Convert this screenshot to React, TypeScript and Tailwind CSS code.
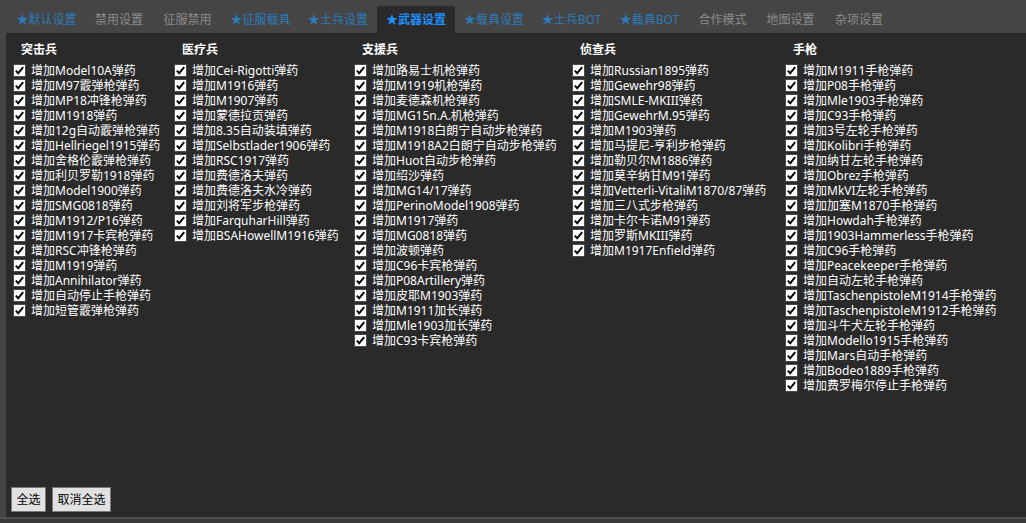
import React from "react";

const tabs: { label: string; kind: "star" | "plain" | "active"; w: string }[] = [
  { label: "★默认设置", kind: "star", w: "w-[77px]" },
  { label: "禁用设置", kind: "plain", w: "w-[68px]" },
  { label: "征服禁用", kind: "plain", w: "w-[69px]" },
  { label: "★征服载具", kind: "star", w: "w-[77px]" },
  { label: "★士兵设置", kind: "star", w: "w-[78px]" },
  { label: "★武器设置", kind: "active", w: "w-[78px]" },
  { label: "★载具设置", kind: "star", w: "w-[78px]" },
  { label: "★士兵BOT", kind: "star", w: "w-[77px]" },
  { label: "★载具BOT", kind: "star", w: "w-[79px]" },
  { label: "合作模式", kind: "plain", w: "w-[67px]" },
  { label: "地图设置", kind: "plain", w: "w-[69px]" },
  { label: "杂项设置", kind: "plain", w: "w-[68px]" },
];

const columns: { title: string; width: string; items: string[] }[] = [
  {
    title: "突击兵",
    width: "w-[161px]",
    items: [
      "增加Model10A弹药",
      "增加M97霰弹枪弹药",
      "增加MP18冲锋枪弹药",
      "增加M1918弹药",
      "增加12g自动霰弹枪弹药",
      "增加Hellriegel1915弹药",
      "增加舍格伦霰弹枪弹药",
      "增加利贝罗勒1918弹药",
      "增加Model1900弹药",
      "增加SMG0818弹药",
      "增加M1912/P16弹药",
      "增加M1917卡宾枪弹药",
      "增加RSC冲锋枪弹药",
      "增加M1919弹药",
      "增加Annihilator弹药",
      "增加自动停止手枪弹药",
      "增加短管霰弹枪弹药",
    ],
  },
  {
    title: "医疗兵",
    width: "w-[180px]",
    items: [
      "增加Cei-Rigotti弹药",
      "增加M1916弹药",
      "增加M1907弹药",
      "增加蒙德拉贡弹药",
      "增加8.35自动装填弹药",
      "增加Selbstlader1906弹药",
      "增加RSC1917弹药",
      "增加费德洛夫弹药",
      "增加费德洛夫水冷弹药",
      "增加刘将军步枪弹药",
      "增加FarquharHill弹药",
      "增加BSAHowellM1916弹药",
    ],
  },
  {
    title: "支援兵",
    width: "w-[218px]",
    items: [
      "增加路易士机枪弹药",
      "增加M1919机枪弹药",
      "增加麦德森机枪弹药",
      "增加MG15n.A.机枪弹药",
      "增加M1918白朗宁自动步枪弹药",
      "增加M1918A2白朗宁自动步枪弹药",
      "增加Huot自动步枪弹药",
      "增加绍沙弹药",
      "增加MG14/17弹药",
      "增加PerinoModel1908弹药",
      "增加M1917弹药",
      "增加MG0818弹药",
      "增加波顿弹药",
      "增加C96卡宾枪弹药",
      "增加P08Artillery弹药",
      "增加皮耶M1903弹药",
      "增加M1911加长弹药",
      "增加Mle1903加长弹药",
      "增加C93卡宾枪弹药",
    ],
  },
  {
    title: "侦查兵",
    width: "w-[213px]",
    items: [
      "增加Russian1895弹药",
      "增加Gewehr98弹药",
      "增加SMLE-MKIII弹药",
      "增加GewehrM.95弹药",
      "增加M1903弹药",
      "增加马提尼-亨利步枪弹药",
      "增加勒贝尔M1886弹药",
      "增加莫辛纳甘M91弹药",
      "增加Vetterli-VitaliM1870/87弹药",
      "增加三八式步枪弹药",
      "增加卡尔卡诺M91弹药",
      "增加罗斯MKIII弹药",
      "增加M1917Enfield弹药",
    ],
  },
  {
    title: "手枪",
    width: "w-[230px]",
    items: [
      "增加M1911手枪弹药",
      "增加P08手枪弹药",
      "增加Mle1903手枪弹药",
      "增加C93手枪弹药",
      "增加3号左轮手枪弹药",
      "增加Kolibri手枪弹药",
      "增加纳甘左轮手枪弹药",
      "增加Obrez手枪弹药",
      "增加MkVI左轮手枪弹药",
      "增加加塞M1870手枪弹药",
      "增加Howdah手枪弹药",
      "增加1903Hammerless手枪弹药",
      "增加C96手枪弹药",
      "增加Peacekeeper手枪弹药",
      "增加自动左轮手枪弹药",
      "增加TaschenpistoleM1914手枪弹药",
      "增加TaschenpistoleM1912手枪弹药",
      "增加斗牛犬左轮手枪弹药",
      "增加Modello1915手枪弹药",
      "增加Mars自动手枪弹药",
      "增加Bodeo1889手枪弹药",
      "增加费罗梅尔停止手枪弹药",
    ],
  },
];

function CheckBox() {
  return (
    <svg width="13" height="13" viewBox="0 0 13 13" className="shrink-0">
      <rect x="0.5" y="0.5" width="12" height="12" fill="#ffffff" stroke="#4a4a4a" />
      <path d="M2.8 6.6 L5.2 9.2 L10.2 3.2" fill="none" stroke="#000000" strokeWidth="1.9" />
    </svg>
  );
}

export default function App() {
  return (
    <div
      className="w-[1026px] h-[523px] bg-[#454545] flex flex-col overflow-hidden"
      style={{ fontFamily: '"Noto Sans", "Noto Sans CJK SC", sans-serif' }}
    >
      <div className="flex pl-[8px] pt-[6px] h-[33px] shrink-0">
        {tabs.map((t) => (
          <div
            key={t.label}
            className={
              t.kind === "active"
                ? `${t.w} h-[27px] flex items-center justify-center whitespace-nowrap bg-[#2a2a2a] text-[#1e90ff] font-bold text-[12px]`
                : t.kind === "star"
                ? `${t.w} h-[27px] flex items-center justify-center whitespace-nowrap text-[#2d7bbb] text-[12px]`
                : `${t.w} h-[27px] flex items-center justify-center whitespace-nowrap text-[#8c8c8c] text-[12px]`
            }
          >
            {t.label}
          </div>
        ))}
      </div>
      <div className="flex-1 ml-[6px] bg-[#2a2a2a] flex flex-col">
        <div className="flex-1 flex pl-[7px] pt-[9px]">
          {columns.map((c) => (
            <div key={c.title} className={`${c.width} shrink-0 flex flex-col`}>
              <div className="pl-[8px] h-[15px] leading-[15px] text-[12px] font-bold text-white mb-[6px]">
                {c.title}
              </div>
              {c.items.map((it) => (
                <div key={it} className="h-[15px] flex items-center gap-[5px]">
                  <CheckBox />
                  <span className="text-[12px] leading-[15px] text-white whitespace-nowrap">{it}</span>
                </div>
              ))}
            </div>
          ))}
        </div>
        <div className="flex gap-[6px] pl-[5px] pb-[5px]">
          <button className="h-[25px] w-[35px] bg-[#e1e1e1] border border-[#7a7a7a] text-[12px] text-black">
            全选
          </button>
          <button className="h-[25px] w-[59px] bg-[#e1e1e1] border border-[#7a7a7a] text-[12px] text-black">
            取消全选
          </button>
        </div>
      </div>
      <div className="h-[6px] shrink-0 bg-[#3a3a3a] border-t-2 border-[#505050]" />
    </div>
  );
}
